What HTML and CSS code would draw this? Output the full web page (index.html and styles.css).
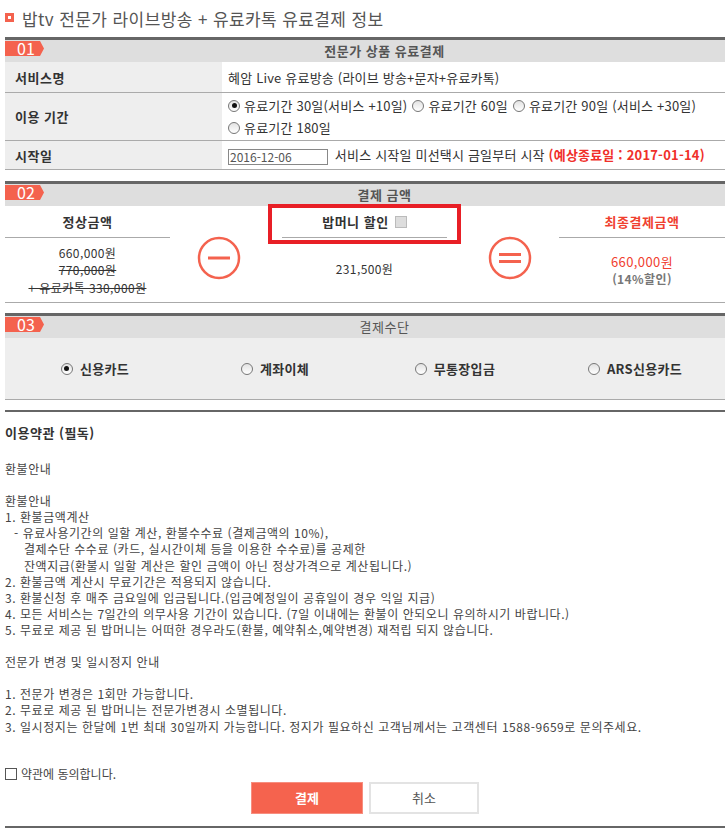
FILE: index.html
```html
<!DOCTYPE html>
<html lang="ko">
<head>
    <meta charset="UTF-8">
    <meta name="viewport" content="width=device-width, initial-scale=1.0">
    <title>밥tv 유료결제 정보</title>
    <link rel="stylesheet" href="styles.css">
</head>
<body>
    <div class="wrap">
        <h1 class="page-title"><span class="title-icon"></span>밥tv 전문가 라이브방송 + 유료카톡 유료결제 정보</h1>

        <!-- 01 상품 -->
        <section class="box">
            <div class="box-head">
                <span class="step">01</span>
                <h2>전문가 상품 유료결제</h2>
            </div>
            <table class="info">
                <tr class="row-name">
                    <th>서비스명</th>
                    <td>혜암 Live 유료방송 (라이브 방송+문자+유료카톡)</td>
                </tr>
                <tr class="row-period">
                    <th>이용 기간</th>
                    <td>
                        <div class="period-line">
                            <label class="opt"><span class="radio checked"></span>유료기간 30일(서비스 +10일)</label>
                            <label class="opt"><span class="radio"></span>유료기간 60일</label>
                            <label class="opt"><span class="radio"></span>유료기간 90일 (서비스 +30일)</label>
                        </div>
                        <div class="period-line">
                            <label class="opt"><span class="radio"></span>유료기간 180일</label>
                        </div>
                    </td>
                </tr>
                <tr class="row-start">
                    <th>시작일</th>
                    <td>
                        <span class="date-input">2016-12-06</span>
                        서비스 시작일 미선택시 금일부터 시작 <strong class="end-date">(예상종료일 : 2017-01-14)</strong>
                    </td>
                </tr>
            </table>
        </section>

        <!-- 02 금액 -->
        <section class="box">
            <div class="box-head">
                <span class="step">02</span>
                <h2>결제 금액</h2>
            </div>
            <div class="calc">
                <div class="calc-col">
                    <div class="col-head">정상금액</div>
                    <div class="col-body normal">
                        <p>660,000원</p>
                        <p class="strike">770,000원</p>
                        <p class="strike">+ 유료카톡 330,000원</p>
                    </div>
                </div>
                <div class="op">
                    <svg width="44" height="44" viewBox="0 0 44 44">
                        <circle cx="22" cy="22" r="20" fill="none" stroke="#f4624e" stroke-width="2.5"/>
                        <line x1="11" y1="22" x2="33" y2="22" stroke="#f4624e" stroke-width="3"/>
                    </svg>
                </div>
                <div class="calc-col mid">
                    <div class="col-head">밥머니 할인 <span class="check-gray"></span></div>
                    <div class="col-body discount">
                        <p>231,500원</p>
                    </div>
                    <div class="highlight"></div>
                </div>
                <div class="op">
                    <svg width="44" height="44" viewBox="0 0 44 44">
                        <circle cx="22" cy="22" r="20" fill="none" stroke="#f4624e" stroke-width="2.5"/>
                        <line x1="11" y1="18.5" x2="33" y2="18.5" stroke="#f4624e" stroke-width="3"/>
                        <line x1="11" y1="25.5" x2="33" y2="25.5" stroke="#f4624e" stroke-width="3"/>
                    </svg>
                </div>
                <div class="calc-col">
                    <div class="col-head final">최종결제금액</div>
                    <div class="col-body total">
                        <p class="total-price">660,000원</p>
                        <p class="total-rate">(14%할인)</p>
                    </div>
                </div>
            </div>
        </section>

        <!-- 03 결제수단 -->
        <section class="box">
            <div class="box-head">
                <span class="step">03</span>
                <h2 class="light">결제수단</h2>
            </div>
            <div class="pay-methods">
                <label class="pay"><span class="radio checked"></span>신용카드</label>
                <label class="pay"><span class="radio"></span>계좌이체</label>
                <label class="pay"><span class="radio"></span>무통장입금</label>
                <label class="pay"><span class="radio"></span>ARS신용카드</label>
            </div>
        </section>

        <!-- 약관 -->
        <div class="terms">
            <h3>이용약관 (필독)</h3>
            <div class="terms-body">
                <p>환불안내</p>
                <p class="blank"></p>
                <p>환불안내</p>
                <p>1. 환불금액계산</p>
                <p class="indent1">- 유료사용기간의 일할 계산, 환불수수료 (결제금액의 10%),</p>
                <p class="indent2">결제수단 수수료 (카드, 실시간이체 등을 이용한 수수료)를 공제한</p>
                <p class="indent2">잔액지급(환불시 일할 계산은 할인 금액이 아닌 정상가격으로 계산됩니다.)</p>
                <p>2. 환불금액 계산시 무료기간은 적용되지 않습니다.</p>
                <p>3. 환불신청 후 매주 금요일에 입금됩니다.(입금예정일이 공휴일이 경우 익일 지급)</p>
                <p>4. 모든 서비스는 7일간의 의무사용 기간이 있습니다. (7일 이내에는 환불이 안되오니 유의하시기 바랍니다.)</p>
                <p>5. 무료로 제공 된 밥머니는 어떠한 경우라도(환불, 예약취소,예약변경) 재적립 되지 않습니다.</p>
                <p class="blank"></p>
                <p>전문가 변경 및 일시정지 안내</p>
                <p class="blank"></p>
                <p>1. 전문가 변경은 1회만 가능합니다.</p>
                <p>2. 무료로 제공 된 밥머니는 전문가변경시 소멸됩니다.</p>
                <p>3. 일시정지는 한달에 1번 최대 30일까지 가능합니다. 정지가 필요하신 고객님께서는 고객센터 1588-9659로 문의주세요.</p>
            </div>
            <label class="agree"><span class="checkbox"></span>약관에 동의합니다.</label>
            <div class="actions">
                <button class="btn btn-pay">결제</button>
                <button class="btn btn-cancel">취소</button>
            </div>
        </div>
    </div>
</body>
</html>
```

FILE: styles.css
```css
/* 유료결제 정보 */
body {
    margin: 0;
    padding: 0;
    font-family: "Noto Sans CJK KR", "Noto Sans", sans-serif;
    font-size: 12px;
    color: #444;
    background-color: #fff;
}

p {
    margin: 0;
}

.wrap {
    width: 720px;
    margin-left: 5px;
}

.page-title {
    margin: 0;
    height: 37px;
    display: flex;
    align-items: center;
    gap: 8px;
    font-size: 17px;
    letter-spacing: 0.4px;
    font-weight: normal;
    color: #555;
}

.title-icon {
    width: 9px;
    height: 9px;
    box-sizing: border-box;
    border: 3px solid #f4624e;
    background-color: #fff;
    margin-top: -2px;
}

.box {
    border-top: 3px solid #666;
}

.box-head {
    height: 22px;
    display: flex;
    background-color: #dedede;
}

.step {
    width: 39px;
    height: 15px;
    margin-top: 1px;
    box-sizing: border-box;
    padding-left: 12px;
    background-color: #f4624e;
    color: #fff;
    font-size: 16px;
    line-height: 15px;
    clip-path: polygon(0 0, 35px 0, 39px 50%, 35px 100%, 0 100%);
}

.box-head h2 {
    flex: 1;
    margin: 0;
    text-align: center;
    font-size: 13px;
    font-weight: bold;
    letter-spacing: 0.5px;
    color: #555;
    line-height: 22px;
}

.box-head h2.light {
    font-weight: normal;
}

/* 01 */
.info {
    width: 100%;
    border-collapse: collapse;
    margin-bottom: 11px;
}

.info th,
.info td {
    border-bottom: 1px solid #aaa;
    font-size: 13px;
}

.info th {
    width: 207px;
    padding: 0 0 0 10px;
    background-color: #eee;
    text-align: left;
    color: #333;
    letter-spacing: 0.5px;
}

.info td {
    padding: 0 0 0 6px;
    color: #333;
    letter-spacing: 0.2px;
}

.row-name th,
.row-name td {
    height: 30px;
}

.row-period th,
.row-period td {
    height: 47px;
}

.row-start th,
.row-start td {
    height: 28px;
}

.period-line {
    display: flex;
    gap: 5px;
    line-height: 22px;
}

.opt {
    display: flex;
    align-items: center;
    gap: 4px;
}

.radio {
    width: 12px;
    height: 12px;
    box-sizing: border-box;
    border: 1px solid #777;
    border-radius: 50%;
    background: linear-gradient(#e2e2e2, #fff);
    position: relative;
    flex-shrink: 0;
}

.radio.checked::after {
    content: "";
    position: absolute;
    left: 2.5px;
    top: 2.5px;
    width: 5px;
    height: 5px;
    border-radius: 50%;
    background-color: #111;
}

.date-input {
    display: inline-block;
    width: 100px;
    height: 16px;
    box-sizing: border-box;
    border: 1px solid #888;
    padding-left: 1px;
    font-size: 12px;
    line-height: 14px;
    letter-spacing: 0;
    color: #555;
    vertical-align: middle;
    margin-right: 3px;
}

.end-date {
    color: #f0302a;
}

/* 02 */
.calc {
    display: grid;
    grid-template-columns: 165px 98px 193px 98px 1fr;
    height: 96px;
    border-bottom: 1px solid #aaa;
    margin-bottom: 10px;
}

.calc-col {
    text-align: center;
}

.col-head {
    height: 31px;
    line-height: 31px;
    border-bottom: 1px solid #aaa;
    font-size: 13px;
    font-weight: bold;
    letter-spacing: 0.5px;
    color: #333;
}

.col-head.final {
    color: #f0402f;
}

.calc-col.mid {
    position: relative;
    padding: 0 14px;
}

.check-gray {
    display: inline-block;
    width: 12px;
    height: 12px;
    box-sizing: border-box;
    border: 1px solid #bbb;
    background-color: #ddd;
    vertical-align: -1px;
    margin-left: 2px;
}

.highlight {
    position: absolute;
    left: 0;
    top: -2px;
    width: 193px;
    height: 40px;
    box-sizing: border-box;
    border: 4px solid #e81f26;
}

.col-body {
    font-size: 12px;
    line-height: 17.4px;
    letter-spacing: 0.4px;
    color: #333;
}

.normal {
    padding-top: 6px;
}

.strike {
    text-decoration: line-through;
}

.discount {
    padding-top: 22px;
}

.total {
    padding-top: 15px;
}

.total-price {
    color: #f0402f;
    font-size: 13px;
}

.total-rate {
    color: #777;
    font-weight: bold;
}

.op {
    display: flex;
    justify-content: center;
    align-items: center;
    padding-top: 8px;
}

/* 03 */
.pay-methods {
    height: 61px;
    display: grid;
    grid-template-columns: repeat(4, 1fr);
    align-items: center;
    background-color: #eee;
    border-bottom: 1px solid #aaa;
    margin-bottom: 10px;
}

.pay {
    display: flex;
    justify-content: center;
    align-items: center;
    gap: 7px;
    font-size: 13px;
    font-weight: bold;
    letter-spacing: 0.3px;
    color: #333;
}

/* 약관 */
.terms {
    border-top: 2px solid #666;
    padding-top: 13px;
    border-bottom: 2px solid #666;
    padding-bottom: 12px;
}

.terms h3 {
    margin: 0 0 20px 0;
    font-size: 13px;
    line-height: 16px;
    letter-spacing: 0.5px;
    color: #333;
}

.terms-body p {
    line-height: 16.1px;
    height: 16.1px;
    letter-spacing: 0.55px;
}

.indent1 {
    padding-left: 9px;
}

.indent2 {
    padding-left: 19px;
}

.agree {
    display: flex;
    align-items: center;
    gap: 4px;
    margin-top: 31px;
    line-height: 16px;
}

.checkbox {
    width: 12px;
    height: 12px;
    box-sizing: border-box;
    border: 1px solid #555;
}

.actions {
    display: flex;
    justify-content: center;
    gap: 6px;
    margin-top: 0;
}

.btn {
    height: 32px;
    font-family: inherit;
    font-size: 13px;
    cursor: pointer;
}

.btn-pay {
    width: 112px;
    background-color: #f5634e;
    border: 1px solid #f78e7f;
    color: #fff;
    font-weight: bold;
}

.btn-cancel {
    width: 110px;
    background-color: #fff;
    border: 2px solid #e3e3e3;
    color: #555;
}
```
